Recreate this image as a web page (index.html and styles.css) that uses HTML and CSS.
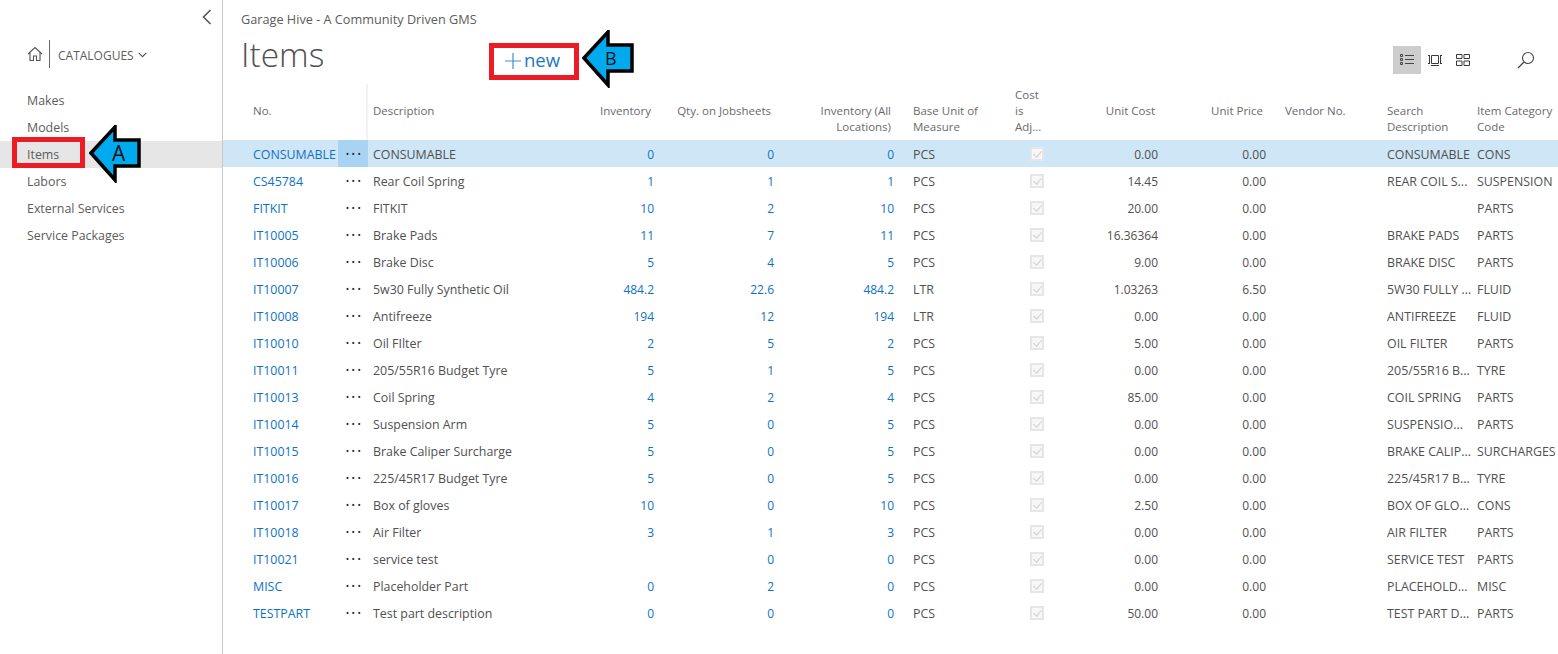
FILE: index.html
```html
<!DOCTYPE html>
<html lang="en">
<head>
  <meta charset="UTF-8" />
  <title>Items</title>
  <link rel="stylesheet" href="styles.css">
</head>
<body>
  <div class="page">
    <aside class="sidebar">
      <div class="collapse">
        <svg width="12" height="16" viewBox="0 0 12 16"><path d="M9.5 1 2.5 8l7 7" fill="none" stroke="#555" stroke-width="1.6"/></svg>
      </div>
      <div class="crumb">
        <svg width="16" height="16" viewBox="0 0 16 16"><path d="M1 8 8 1.5 15 8M3 6.5V14.5H6.5V10H9.5V14.5H13V6.5" fill="none" stroke="#555" stroke-width="1.1"/></svg>
        <span class="crumb-line"></span>
        <span class="crumb-name">CATALOGUES</span>
        <svg class="crumb-arrow" width="9" height="6" viewBox="0 0 9 6"><path d="M.7.8 4.5 4.6 8.3.8" fill="none" stroke="#555" stroke-width="1.1"/></svg>
      </div>
      <nav class="side-nav">
        <a href="#">Makes</a>
        <a href="#">Models</a>
        <a href="#" class="active">Items</a>
        <a href="#">Labors</a>
        <a href="#">External Services</a>
        <a href="#">Service Packages</a>
      </nav>
    </aside>

    <main class="content">
      <header class="top">
        <div class="app-name">Garage Hive - A Community Driven GMS</div>
        <h1>Items</h1>
        <div class="tools">
          <span class="tool on">
            <svg width="16" height="14" viewBox="0 0 16 14"><path d="M1.500 1.500h2v2h-2zM1.500 5.500h2v2h-2zM1.500 9.500h2v2h-2zM6 2.500h9M6 6.500h9M6 10.500h9" fill="none" stroke="#444"/></svg>
          </span>
          <span class="tool">
            <svg width="16" height="14" viewBox="0 0 16 14"><path d="M4.500 2.500h7v8h-7zM1 2.500h2M1 10.500h2M2.500 2.500v8M13 2.500h2M13 10.500h2M13.500 2.500v8M4 12.500h8" fill="none" stroke="#3a3a3a"/></svg>
          </span>
          <span class="tool">
            <svg width="16" height="14" viewBox="0 0 16 14"><path d="M1.500 1.500h5.500v4h-5.500zM9 1.500h5.500v4h-5.500zM1.500 8h5.500v4.500h-5.500zM9 8h5.500v4.500h-5.500z" fill="none" stroke="#3a3a3a"/></svg>
          </span>
          <span class="tool search">
            <svg width="18" height="18" viewBox="0 0 18 18"><circle cx="11" cy="7" r="5.500" fill="none" stroke="#444" stroke-width="1.100"/><path d="M7 11 1 17" stroke="#444" stroke-width="1.300"/></svg>
          </span>
        </div>
      </header>

      <table class="grid">
        <colgroup>
          <col class="c-no"><col class="c-dots"><col class="c-desc"><col class="c-inv"><col class="c-qty"><col class="c-all">
          <col class="c-base"><col class="c-adj"><col class="c-cost"><col class="c-price"><col class="c-vend"><col class="c-search"><col class="c-cat">
        </colgroup>
        <thead>
          <tr>
            <th class="first one">No.</th><th class="sep"></th><th class="one">Description</th>
            <th class="num one">Inventory</th><th class="num one">Qty. on Jobsheets</th><th class="num">Inventory (All Locations)</th>
            <th class="base">Base Unit of Measure</th><th class="adj">Cost is Adj...</th>
            <th class="num one">Unit Cost</th><th class="num one">Unit Price</th><th class="vend one">Vendor No.</th>
            <th>Search Description</th><th class="cat">Item Category Code</th>
          </tr>
        </thead>
        <tbody>
          <tr class="selected"><td class="first"><a href="#">CONSUMABLE</a></td><td class="dots">&#8226;&#8226;&#8226;</td><td>CONSUMABLE</td><td class="num"><a href="#">0</a></td><td class="num"><a href="#">0</a></td><td class="num"><a href="#">0</a></td><td class="base">PCS</td><td><span class="check"></span></td><td class="num">0.00</td><td class="num">0.00</td><td></td><td>CONSUMABLE</td><td class="cat">CONS</td></tr>
          <tr><td class="first"><a href="#">CS45784</a></td><td class="dots">&#8226;&#8226;&#8226;</td><td>Rear Coil Spring</td><td class="num"><a href="#">1</a></td><td class="num"><a href="#">1</a></td><td class="num"><a href="#">1</a></td><td class="base">PCS</td><td><span class="check"></span></td><td class="num">14.45</td><td class="num">0.00</td><td></td><td>REAR COIL S...</td><td class="cat">SUSPENSION</td></tr>
          <tr><td class="first"><a href="#">FITKIT</a></td><td class="dots">&#8226;&#8226;&#8226;</td><td>FITKIT</td><td class="num"><a href="#">10</a></td><td class="num"><a href="#">2</a></td><td class="num"><a href="#">10</a></td><td class="base">PCS</td><td><span class="check"></span></td><td class="num">20.00</td><td class="num">0.00</td><td></td><td></td><td class="cat">PARTS</td></tr>
          <tr><td class="first"><a href="#">IT10005</a></td><td class="dots">&#8226;&#8226;&#8226;</td><td>Brake Pads</td><td class="num"><a href="#">11</a></td><td class="num"><a href="#">7</a></td><td class="num"><a href="#">11</a></td><td class="base">PCS</td><td><span class="check"></span></td><td class="num">16.36364</td><td class="num">0.00</td><td></td><td>BRAKE PADS</td><td class="cat">PARTS</td></tr>
          <tr><td class="first"><a href="#">IT10006</a></td><td class="dots">&#8226;&#8226;&#8226;</td><td>Brake Disc</td><td class="num"><a href="#">5</a></td><td class="num"><a href="#">4</a></td><td class="num"><a href="#">5</a></td><td class="base">PCS</td><td><span class="check"></span></td><td class="num">9.00</td><td class="num">0.00</td><td></td><td>BRAKE DISC</td><td class="cat">PARTS</td></tr>
          <tr><td class="first"><a href="#">IT10007</a></td><td class="dots">&#8226;&#8226;&#8226;</td><td>5w30 Fully Synthetic Oil</td><td class="num"><a href="#">484.2</a></td><td class="num"><a href="#">22.6</a></td><td class="num"><a href="#">484.2</a></td><td class="base">LTR</td><td><span class="check"></span></td><td class="num">1.03263</td><td class="num">6.50</td><td></td><td>5W30 FULLY ...</td><td class="cat">FLUID</td></tr>
          <tr><td class="first"><a href="#">IT10008</a></td><td class="dots">&#8226;&#8226;&#8226;</td><td>Antifreeze</td><td class="num"><a href="#">194</a></td><td class="num"><a href="#">12</a></td><td class="num"><a href="#">194</a></td><td class="base">LTR</td><td><span class="check"></span></td><td class="num">0.00</td><td class="num">0.00</td><td></td><td>ANTIFREEZE</td><td class="cat">FLUID</td></tr>
          <tr><td class="first"><a href="#">IT10010</a></td><td class="dots">&#8226;&#8226;&#8226;</td><td>Oil FIlter</td><td class="num"><a href="#">2</a></td><td class="num"><a href="#">5</a></td><td class="num"><a href="#">2</a></td><td class="base">PCS</td><td><span class="check"></span></td><td class="num">5.00</td><td class="num">0.00</td><td></td><td>OIL FILTER</td><td class="cat">PARTS</td></tr>
          <tr><td class="first"><a href="#">IT10011</a></td><td class="dots">&#8226;&#8226;&#8226;</td><td>205/55R16 Budget Tyre</td><td class="num"><a href="#">5</a></td><td class="num"><a href="#">1</a></td><td class="num"><a href="#">5</a></td><td class="base">PCS</td><td><span class="check"></span></td><td class="num">0.00</td><td class="num">0.00</td><td></td><td>205/55R16 B...</td><td class="cat">TYRE</td></tr>
          <tr><td class="first"><a href="#">IT10013</a></td><td class="dots">&#8226;&#8226;&#8226;</td><td>Coil Spring</td><td class="num"><a href="#">4</a></td><td class="num"><a href="#">2</a></td><td class="num"><a href="#">4</a></td><td class="base">PCS</td><td><span class="check"></span></td><td class="num">85.00</td><td class="num">0.00</td><td></td><td>COIL SPRING</td><td class="cat">PARTS</td></tr>
          <tr><td class="first"><a href="#">IT10014</a></td><td class="dots">&#8226;&#8226;&#8226;</td><td>Suspension Arm</td><td class="num"><a href="#">5</a></td><td class="num"><a href="#">0</a></td><td class="num"><a href="#">5</a></td><td class="base">PCS</td><td><span class="check"></span></td><td class="num">0.00</td><td class="num">0.00</td><td></td><td>SUSPENSIO...</td><td class="cat">PARTS</td></tr>
          <tr><td class="first"><a href="#">IT10015</a></td><td class="dots">&#8226;&#8226;&#8226;</td><td>Brake Caliper Surcharge</td><td class="num"><a href="#">5</a></td><td class="num"><a href="#">0</a></td><td class="num"><a href="#">5</a></td><td class="base">PCS</td><td><span class="check"></span></td><td class="num">0.00</td><td class="num">0.00</td><td></td><td>BRAKE CALIP...</td><td class="cat">SURCHARGES</td></tr>
          <tr><td class="first"><a href="#">IT10016</a></td><td class="dots">&#8226;&#8226;&#8226;</td><td>225/45R17 Budget Tyre</td><td class="num"><a href="#">5</a></td><td class="num"><a href="#">0</a></td><td class="num"><a href="#">5</a></td><td class="base">PCS</td><td><span class="check"></span></td><td class="num">0.00</td><td class="num">0.00</td><td></td><td>225/45R17 B...</td><td class="cat">TYRE</td></tr>
          <tr><td class="first"><a href="#">IT10017</a></td><td class="dots">&#8226;&#8226;&#8226;</td><td>Box of gloves</td><td class="num"><a href="#">10</a></td><td class="num"><a href="#">0</a></td><td class="num"><a href="#">10</a></td><td class="base">PCS</td><td><span class="check"></span></td><td class="num">2.50</td><td class="num">0.00</td><td></td><td>BOX OF GLO...</td><td class="cat">CONS</td></tr>
          <tr><td class="first"><a href="#">IT10018</a></td><td class="dots">&#8226;&#8226;&#8226;</td><td>Air Filter</td><td class="num"><a href="#">3</a></td><td class="num"><a href="#">1</a></td><td class="num"><a href="#">3</a></td><td class="base">PCS</td><td><span class="check"></span></td><td class="num">0.00</td><td class="num">0.00</td><td></td><td>AIR FILTER</td><td class="cat">PARTS</td></tr>
          <tr><td class="first"><a href="#">IT10021</a></td><td class="dots">&#8226;&#8226;&#8226;</td><td>service test</td><td class="num"></td><td class="num"><a href="#">0</a></td><td class="num"><a href="#">0</a></td><td class="base">PCS</td><td><span class="check"></span></td><td class="num">0.00</td><td class="num">0.00</td><td></td><td>SERVICE TEST</td><td class="cat">PARTS</td></tr>
          <tr><td class="first"><a href="#">MISC</a></td><td class="dots">&#8226;&#8226;&#8226;</td><td>Placeholder Part</td><td class="num"><a href="#">0</a></td><td class="num"><a href="#">2</a></td><td class="num"><a href="#">0</a></td><td class="base">PCS</td><td><span class="check"></span></td><td class="num">0.00</td><td class="num">0.00</td><td></td><td>PLACEHOLD...</td><td class="cat">MISC</td></tr>
          <tr><td class="first"><a href="#">TESTPART</a></td><td class="dots">&#8226;&#8226;&#8226;</td><td>Test part description</td><td class="num"><a href="#">0</a></td><td class="num"><a href="#">0</a></td><td class="num"><a href="#">0</a></td><td class="base">PCS</td><td><span class="check"></span></td><td class="num">50.00</td><td class="num">0.00</td><td></td><td>TEST PART D...</td><td class="cat">PARTS</td></tr>
        </tbody>
      </table>
    </main>
  </div>

  <!-- annotations drawn over the screenshot -->
  <div class="mark mark-items"></div>
  <div class="mark mark-new">
    <svg width="16" height="16" viewBox="0 0 16 16"><path d="M8 0V16M0 8H16" stroke="#3f8fd2" stroke-width="1.200"/></svg>
    <span class="new-label">new</span>
  </div>
  <div class="arrow arrow-a">
    <svg width="52" height="58" viewBox="0 0 52 58"><path d="M2 28 26 2V15H50V41H26V55Z" fill="#00aaef" stroke="#000" stroke-width="3.500"/></svg>
    <span>A</span>
  </div>
  <div class="arrow arrow-b">
    <svg width="52" height="58" viewBox="0 0 52 58"><path d="M2 28 26 2V15H50V41H26V55Z" fill="#00aaef" stroke="#000" stroke-width="3.500"/></svg>
    <span>B</span>
  </div>
</body>
</html>
```

FILE: styles.css
```css
* {
  box-sizing: border-box;
}
body {
  margin: 0;
  font-family: 'Open Sans', 'Noto Sans', sans-serif;
  font-size: 12.4px;
  color: #505050;
  background-color: white;
  overflow: hidden;
}
a {
  color: #0e72c4;
  text-decoration: none;
}
.page {
  display: flex;
  height: 654px;
}

/* left menu */
.sidebar {
  width: 223px;
  flex-shrink: 0;
  border-right: 1px solid #c8c8c8;
}
.collapse {
  display: flex;
  justify-content: flex-end;
  height: 40px;
  padding: 9px 9px 0 0;
}
.crumb {
  display: flex;
  align-items: center;
  height: 28px;
  padding-left: 27px;
  font-size: 12px;
  color: #5c5c5c;
}
.crumb-line {
  width: 1px;
  height: 28px;
  margin: 0 8px 0 6px;
  background-color: #666;
}
.crumb-name {
  padding-top: 2px;
}
.crumb-arrow {
  margin: 1px 0 0 4px;
}
.side-nav {
  margin-top: 19px;
}
.side-nav a {
  display: block;
  height: 27px;
  line-height: 27px;
  padding-left: 27px;
  color: #5c5c5c;
}
.side-nav a.active {
  background-color: #e6e6e6;
}

/* title area */
.content {
  flex: 1;
  min-width: 0;
}
.top {
  position: relative;
  height: 84px;
  padding: 10px 0 0 18px;
}
.app-name {
  font-size: 12.700px;
  line-height: 18px;
  color: #5c5c5c;
}
h1 {
  margin: 2px 0 0;
  font-size: 33.500px;
  font-weight: 300;
  line-height: 48px;
  color: #505050;
}
.tools {
  position: absolute;
  top: 46px;
  left: 1170px;
  display: flex;
}
.tool {
  display: flex;
  align-items: center;
  justify-content: center;
  width: 28px;
  height: 28px;
}
.tool.on {
  background-color: #cdcdcd;
}
.tool.search {
  margin-left: 35px;
}

/* item table */
.grid {
  width: 1335px;
  table-layout: fixed;
  border-collapse: collapse;
}
.c-no { width: 115px; }
.c-dots { width: 30px; }
.c-desc { width: 222px; }
.c-inv { width: 69px; }
.c-qty { width: 120px; }
.c-all { width: 120px; }
.c-base { width: 111px; }
.c-adj { width: 58px; }
.c-cost { width: 95px; }
.c-price { width: 108px; }
.c-vend { width: 111px; }
.c-search { width: 95px; }
.c-cat { width: 81px; }

th {
  height: 56px;
  padding: 0 5px 5px;
  vertical-align: bottom;
  text-align: left;
  font-size: 11.500px;
  font-weight: 400;
  line-height: 16px;
  color: #6a6a6a;
}
th.one {
  padding-bottom: 21px;
}
td {
  height: 27px;
  padding: 2px 5px 0;
  white-space: nowrap;
  overflow: visible;
}
th.first, td.first {
  padding-left: 30px;
}
th.sep {
  box-shadow: inset -2px 0 0 #f2f2f2;
}
th.num {
  padding-right: 8px;
  text-align: right;
}
td.num {
  font-size: 12px;
  text-align: right;
}
.base {
  padding-left: 14px;
}
th.adj {
  padding-right: 20px;
}
.vend {
  padding-left: 14px;
}
.cat {
  padding-left: 0;
}
td.dots {
  padding: 0 0 0 3px;
  text-align: center;
  font-size: 9px;
  letter-spacing: 2.500px;
  color: #222;
}
.selected td {
  background-color: #cfe6f7;
}
.selected td.dots {
  background-color: #a9d3f2;
}
.check {
  display: block;
  position: relative;
  width: 14px;
  height: 14px;
  margin: -2px 0 0 15px;
  border: 2px solid #e6e6e6;
  background-color: #f7f7f7;
}
.check::after {
  content: "";
  position: absolute;
  left: 3px;
  top: 0;
  width: 4px;
  height: 7px;
  border: solid #cfcfcf;
  border-width: 0 1px 1px 0;
  transform: rotate(40deg);
}

/* red boxes and arrows */
.mark {
  position: absolute;
  border: 5px solid #ed1c24;
}
.mark-items {
  left: 12px;
  top: 137px;
  width: 73px;
  height: 31px;
}
.mark-new {
  display: flex;
  align-items: center;
  gap: 3px;
  left: 489px;
  top: 43px;
  width: 90px;
  height: 37px;
  padding: 0 0 1px 11px;
  background-color: white;
  font-size: 18.500px;
  color: #1979c3;
  white-space: nowrap;
}
.new-label {
  margin-top: -3px;
}
.arrow {
  position: absolute;
  width: 52px;
  height: 58px;
}
.arrow svg {
  display: block;
}
.arrow span {
  position: absolute;
  top: 14px;
  left: 23px;
  line-height: 28px;
  color: #111;
}
.arrow-a {
  left: 89px;
  top: 125px;
}
.arrow-a span {
  font-size: 21px;
}
.arrow-b {
  left: 582px;
  top: 30px;
}
.arrow-b span {
  font-size: 18px;
}
```
